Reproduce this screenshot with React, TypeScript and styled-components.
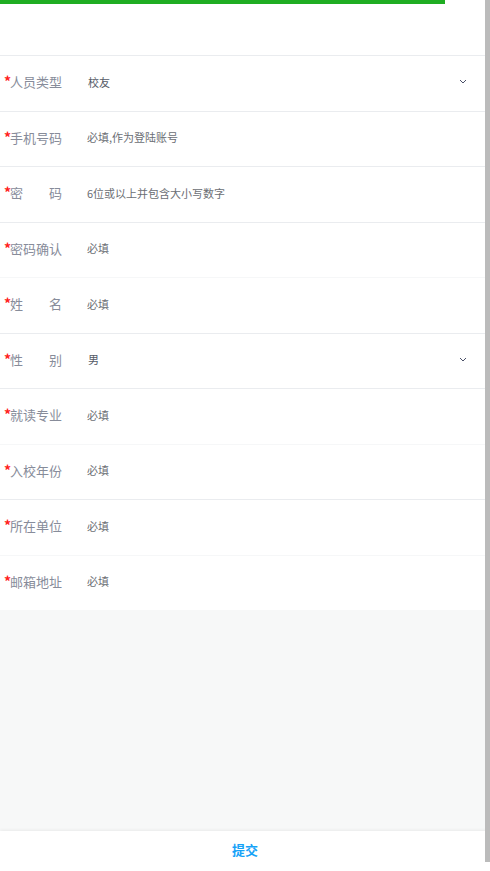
import React from "react";
import styled, { createGlobalStyle } from "styled-components";

const Global = createGlobalStyle`
  html, body { margin: 0; padding: 0; height: 100%; }
  body {
    background: #f7f8f8;
    font-family: "Noto Sans CJK SC", "Noto Sans", sans-serif;
    overflow: hidden;
  }
  #root { min-height: 100%; }
`;

const Page = styled.div`
  position: relative;
  height: 871px;
  display: flex;
  flex-direction: column;
  background: #f7f8f8;
`;

const Progress = styled.div`
  height: 4px;
  background: #ffffff;
  flex-shrink: 0;
`;

const ProgressFill = styled.div`
  height: 100%;
  background: #1fad22;
`;

const Header = styled.div`
  height: 51px;
  background: #ffffff;
  flex-shrink: 0;
`;

const Form = styled.div`
  background: #ffffff;
  padding-right: 5px;
  flex-shrink: 0;
`;

const Row = styled.div<{ $strong?: boolean }>`
  height: 55.5px;
  box-sizing: border-box;
  display: flex;
  align-items: center;
  border-top: 1px solid ${(p) => (p.$strong ? "#eaecef" : "#f6f7f8")};
  padding-right: 18px;
  padding-bottom: 3px;
`;

const Label = styled.div`
  width: 87px;
  flex-shrink: 0;
  display: flex;
  align-items: center;
  padding-left: 4px;
  box-sizing: border-box;
`;

const Star = styled.span`
  color: #ff2020;
  font-size: 14px;
  font-weight: 700;
  width: 6px;
  line-height: 1;
  margin-top: -1px;
`;

const LabelText = styled.span<{ $spread?: boolean }>`
  width: 52px;
  font-size: 13px;
  color: #878c9a;
  display: flex;
  justify-content: ${(p) => (p.$spread ? "space-between" : "flex-start")};
`;

const Value = styled.div<{ $select?: boolean }>`
  flex: 1;
  font-size: 11px;
  color: ${(p) => (p.$select ? "#555a66" : "#6b6e74")};
  padding-left: ${(p) => (p.$select ? "1px" : "0")};
`;

const Chevron = styled.svg`
  width: 8px;
  height: 5px;
  flex-shrink: 0;
`;

const Spacer = styled.div`
  flex: 1;
  background: #f7f8f8;
`;

const Footer = styled.div`
  height: 40px;
  flex-shrink: 0;
  background: #ffffff;
  box-shadow: 0 -1px 3px rgba(0, 0, 0, 0.06);
  display: flex;
  align-items: center;
  justify-content: center;
  padding-bottom: 3px;
  box-sizing: border-box;
`;

const Submit = styled.span`
  color: #16a2f7;
  font-size: 13px;
  font-weight: 700;
`;

const ScrollThumb = styled.div`
  position: absolute;
  top: 0;
  right: 0;
  width: 5px;
  height: 862px;
  background: #bbbbbb;
`;

type Field = {
  label: string;
  value: string;
  spread?: boolean;
  select?: boolean;
  strong: boolean;
};

const fields: Field[] = [
  { label: "人员类型", value: "校友", select: true, strong: true },
  { label: "手机号码", value: "必填,作为登陆账号", strong: true },
  { label: "密码", value: "6位或以上并包含大小写数字", spread: true, strong: true },
  { label: "密码确认", value: "必填", strong: true },
  { label: "姓名", value: "必填", spread: true, strong: false },
  { label: "性别", value: "男", spread: true, select: true, strong: true },
  { label: "就读专业", value: "必填", strong: true },
  { label: "入校年份", value: "必填", strong: false },
  { label: "所在单位", value: "必填", strong: true },
  { label: "邮箱地址", value: "必填", strong: false },
];

export default function App() {
  return (
    <>
      <Global />
      <Page>
        <Progress>
          <ProgressFill style={{ width: "445px" }} />
        </Progress>
        <Header />
        <Form>
          {fields.map((f) => (
            <Row key={f.label} $strong={f.strong}>
              <Label>
                <Star>*</Star>
                <LabelText $spread={f.spread}>
                  {f.spread
                    ? f.label.split("").map((c) => <span key={c}>{c}</span>)
                    : f.label}
                </LabelText>
              </Label>
              <Value $select={f.select}>{f.value}</Value>
              {f.select && (
                <Chevron viewBox="0 0 8 5">
                  <path
                    d="M1 1 L4 4 L7 1"
                    fill="none"
                    stroke="#4a5068"
                    strokeWidth="1"
                  />
                </Chevron>
              )}
            </Row>
          ))}
        </Form>
        <Spacer />
        <Footer>
          <Submit>提交</Submit>
        </Footer>
        <ScrollThumb />
      </Page>
    </>
  );
}
